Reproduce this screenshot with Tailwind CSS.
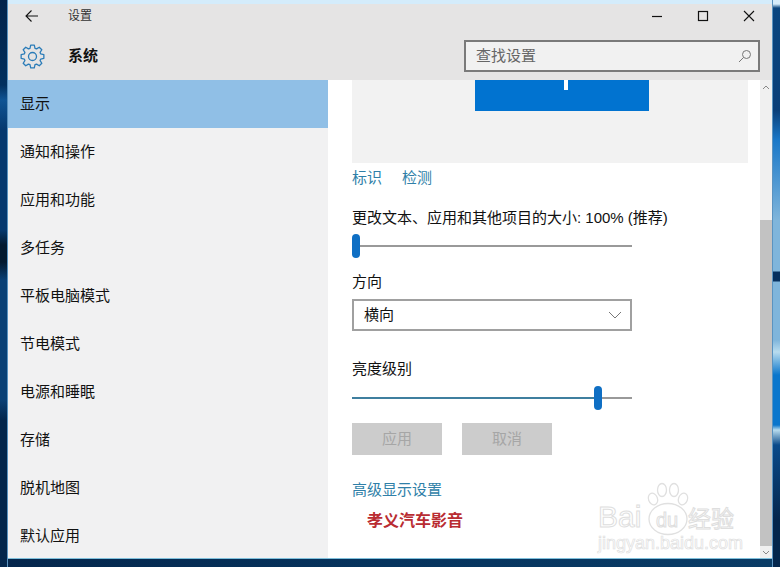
<!DOCTYPE html>
<html lang="zh-CN">
<head>
  <meta charset="UTF-8">
  <title>设置</title>
  <script src="https://cdn.jsdelivr.net/npm/@tailwindcss/browser@4"></script>
</head>
<body class="w-[780px] h-[567px] overflow-hidden flex font-['Liberation_Sans','Noto_Sans_CJK_SC',sans-serif] text-[15px] text-[#111] bg-[#04264c]">
  <!-- wallpaper left of the window -->
  <div class="w-[8px] h-full shrink-0 border-r border-[#5a93c0] bg-[linear-gradient(to_bottom,#02234a_0,#02305e_85px,#0f5494_100px,#05386e_130px,#05386e_230px,#031a30_245px,#031a30_262px,#0a4075_280px,#0a4075_400px,#03264c_420px,#03264c_100%)]"></div>

  <div class="w-[764px] shrink-0 flex flex-col">
    <div class="h-[4px] bg-[#d4ecfb]"></div>
    <div class="relative h-[555px] flex flex-col border-b border-[#7fc0dc]">
      <!-- title bar -->
      <header class="h-[76px] bg-[#e5e4e4] shrink-0">
        <div class="h-[24px] flex items-center">
          <svg class="ml-[17px] w-[14px] h-[14px]" viewBox="0 0 14 14" fill="none" stroke="#111" stroke-width="1.1"><path d="M1 7h12M6.500 1.500 1 7l5.500 5.500"/></svg>
          <span class="ml-[29px] text-[12px] text-[#333]">设置</span>
          <svg class="ml-auto mr-[34px] w-[12px] h-[12px]" viewBox="0 0 12 12" stroke="#111" stroke-width="1.2"><path d="M1 6.500h10"/></svg>
          <svg class="mr-[34px] w-[12px] h-[12px]" viewBox="0 0 12 12" fill="none" stroke="#111" stroke-width="1.2"><rect x="1.500" y="1.500" width="9" height="9"/></svg>
          <svg class="mr-[17px] w-[12px] h-[12px]" viewBox="0 0 12 12" stroke="#111" stroke-width="1.1"><path d="M1 1l10 10M11 1 1 11"/></svg>
        </div>
        <div class="h-[52px] flex items-center pt-[4px]">
          <svg class="ml-[12px] w-[25px] h-[25px]" viewBox="-12.500 -12.500 25 25" fill="none" stroke="#2b7cb8" stroke-width="1.300" stroke-linejoin="round">
            <circle r="4"/>
            <polygon points="-2.51,-8.22 -1.8,-11.36 1.8,-11.36 2.51,-8.22 4.04,-7.59 6.76,-9.31 9.31,-6.76 7.59,-4.04 8.22,-2.51 11.36,-1.8 11.36,1.8 8.22,2.51 7.59,4.04 9.31,6.76 6.76,9.31 4.04,7.59 2.51,8.22 1.8,11.36 -1.8,11.36 -2.51,8.22 -4.04,7.59 -6.76,9.31 -9.31,6.76 -7.59,4.04 -8.22,2.51 -11.36,1.8 -11.36,-1.8 -8.22,-2.51 -7.59,-4.04 -9.31,-6.76 -6.76,-9.31 -4.04,-7.59"/>
          </svg>
          <span class="ml-[23px] font-bold text-[#111]">系统</span>
          <div class="ml-auto mr-[12px] w-[296px] h-[32px] border-2 border-[#7a7a7a] bg-[#f1f1f1] flex items-center pl-[10px] pr-[6px]">
            <span class="text-[#666]">查找设置</span>
            <svg class="ml-auto w-[14px] h-[14px]" viewBox="0 0 14 14" fill="none" stroke="#777" stroke-width="1"><circle cx="8.500" cy="5.500" r="4"/><path d="M5.500 8.500 1 13"/></svg>
          </div>
        </div>
      </header>

      <div class="flex flex-1 min-h-0">
        <!-- sidebar -->
        <nav class="w-[320px] bg-[#f1f1f2] shrink-0 overflow-hidden">
          <a class="h-[48px] flex items-center pl-[12px] pt-[1px] bg-[#90bfe6]">显示</a>
          <a class="h-[48px] flex items-center pl-[12px] pt-[1px]">通知和操作</a>
          <a class="h-[48px] flex items-center pl-[12px] pt-[1px]">应用和功能</a>
          <a class="h-[48px] flex items-center pl-[12px] pt-[1px]">多任务</a>
          <a class="h-[48px] flex items-center pl-[12px] pt-[1px]">平板电脑模式</a>
          <a class="h-[48px] flex items-center pl-[12px] pt-[1px]">节电模式</a>
          <a class="h-[48px] flex items-center pl-[12px] pt-[1px]">电源和睡眠</a>
          <a class="h-[48px] flex items-center pl-[12px] pt-[1px]">存储</a>
          <a class="h-[48px] flex items-center pl-[12px] pt-[1px]">脱机地图</a>
          <a class="h-[48px] flex items-center pl-[12px] pt-[1px]">默认应用</a>
        </nav>

        <!-- content -->
        <main class="flex-1 bg-white pl-[24px]">
          <div class="w-[396px] h-[83px] bg-[#f2f2f2] pl-[123px]">
            <div class="w-[174px] h-[31px] bg-[#0173d0] pl-[89px]">
              <div class="w-[4px] h-[10px] bg-white"></div>
            </div>
          </div>
          <div class="mt-[5px] h-[20px] flex items-center gap-[20px] text-[#2f7fa8]">
            <span>标识</span>
            <span>检测</span>
          </div>
          <p class="mt-[20px] h-[20px] leading-[20px] whitespace-nowrap">更改文本、应用和其他项目的大小: 100% (推荐)</p>
          <div class="mt-[6px] w-[280px] h-[24px] flex items-center">
            <div class="w-[8px] h-[24px] rounded-full bg-[#0f6fc4] shrink-0"></div>
            <div class="flex-1 h-[2px] bg-[#999]"></div>
          </div>
          <p class="mt-[14px] h-[20px] leading-[20px]">方向</p>
          <div class="mt-[7px] w-[280px] h-[32px] border-2 border-[#a0a0a0] flex items-center pl-[10px] pr-[8px]">
            <span>横向</span>
            <svg class="ml-auto w-[14px] h-[8px]" viewBox="0 0 14 8" fill="none" stroke="#777" stroke-width="1"><path d="M1 1l6 6 6-6"/></svg>
          </div>
          <p class="mt-[28px] h-[20px] leading-[20px]">亮度级别</p>
          <div class="mt-[7px] w-[280px] h-[24px] flex items-center">
            <div class="w-[242px] h-[2px] bg-[#3f7f9f]"></div>
            <div class="w-[8px] h-[24px] rounded-full bg-[#0f6fc4] shrink-0"></div>
            <div class="flex-1 h-[2px] bg-[#999]"></div>
          </div>
          <div class="mt-[13px] flex gap-[20px]">
            <div class="w-[90px] h-[32px] bg-[#cccccc] text-[#a6a6a6] flex items-center justify-center">应用</div>
            <div class="w-[90px] h-[32px] bg-[#cccccc] text-[#a6a6a6] flex items-center justify-center">取消</div>
          </div>
          <p class="mt-[25px] h-[20px] leading-[20px] text-[#2f7fa8]">高级显示设置</p>
          <p class="mt-[11px] ml-[15px] h-[20px] leading-[20px] text-[16px] font-bold text-[#b92c32]">孝义汽车影音</p>
        </main>

        <!-- scrollbar -->
        <div class="w-[12px] bg-[#f0f0f0] flex flex-col shrink-0">
          <svg class="mt-[5px] ml-[2px] w-[8px] h-[5px]" viewBox="0 0 8 5" fill="none" stroke="#888" stroke-width="1"><path d="M1 4l3-3 3 3"/></svg>
          <div class="mt-[130px] h-[326px] bg-[#c2c2c2]"></div>
          <svg class="mt-[4px] ml-[2px] w-[8px] h-[5px]" viewBox="0 0 8 5" fill="none" stroke="#888" stroke-width="1"><path d="M1 1l3 3 3-3"/></svg>
        </div>
      </div>

      <!-- baidu watermark -->
      <div class="absolute left-[590px] top-[478px] w-[145px] text-white [-webkit-text-stroke:1px_#dedede]">
        <svg class="absolute left-[48px] top-0 w-[44px] h-[54px]" viewBox="0 0 44 54" fill="#fff" stroke="#e0e0e0" stroke-width="1.300">
          <ellipse cx="7" cy="17" rx="4.500" ry="6" transform="rotate(-20 7 17)"/>
          <ellipse cx="16" cy="8" rx="4.500" ry="6.500"/>
          <ellipse cx="28" cy="8" rx="4.500" ry="6.500"/>
          <ellipse cx="37" cy="17" rx="4.500" ry="6" transform="rotate(20 37 17)"/>
          <ellipse cx="22" cy="37" rx="19" ry="15.500"/>
        </svg>
        <div class="relative mt-[21px] h-[28px] flex items-center whitespace-nowrap">
          <span class="text-[30px] leading-[28px] w-[47px]">Bai</span>
          <span class="ml-[11px] mt-[5px] text-[20px] leading-[20px] w-[32px]">du</span>
          <span class="text-[23px] leading-[28px] font-['Noto_Sans_CJK_SC',sans-serif]">经验</span>
        </div>
        <div class="relative mt-[3px] text-[18px] leading-[18px] [-webkit-text-stroke:0.7px_#e0e0e0] whitespace-nowrap">jingyan.baidu.com</div>
      </div>
    </div>
    <div class="flex-1 bg-[linear-gradient(to_right,#04264c,#06345e_50%,#0a3c66)]"></div>
  </div>

  <!-- wallpaper right of the window -->
  <div class="w-[8px] h-full shrink-0 border-l border-[#5a93c0] bg-[linear-gradient(to_bottom,#d4ecfb_0,#d4ecfb_4px,#0a4680_8px,#0a3f78_110px,#1a78c8_140px,#7fb5db_220px,#7fb5db_271px,#06305e_272px,#06305e_281px,#7fb5db_282px,#7fb5db_340px,#b8dcee_352px,#0a76cc_375px,#0a76cc_425px,#b8dcee_430px,#0a4a8a_445px,#04264c_520px,#04264c_100%)]"></div>
</body>
</html>
